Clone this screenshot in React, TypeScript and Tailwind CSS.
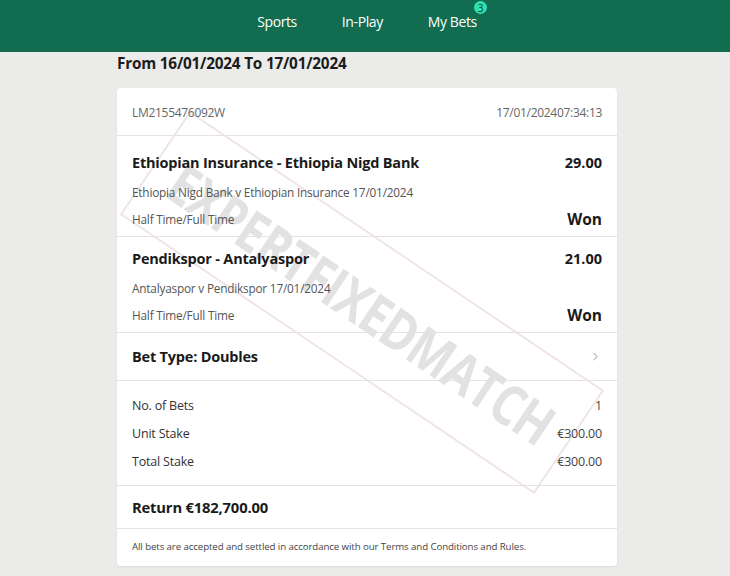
import { ChevronRight } from "lucide-react";

const font = { fontFamily: '"Open Sans", "Noto Sans", sans-serif' };

function Selection({
  title,
  odds,
  event,
  first,
}: {
  title: string;
  odds: string;
  event: string;
  first?: boolean;
}) {
  return (
    <div className={`border-b border-[#e3e3e3] px-[15px] ${first ? "h-[101px] pt-[16px]" : "h-[96px] pt-[11px]"}`}>
      <div className="flex h-[22px] items-center justify-between">
        <span className="text-[14.5px] font-bold tracking-[-0.2px] text-[#1a1a1a]">{title}</span>
        <span className="text-[14.5px] font-bold text-[#1a1a1a]">{odds}</span>
      </div>
      <div className="mt-[8px] h-[22px] flex items-center text-[11.8px] text-[#555] tracking-[-0.2px]">{event}</div>
      <div className="mt-[5px] flex h-[22px] items-center justify-between">
        <span className="text-[11.8px] text-[#555] tracking-[-0.2px]">Half Time/Full Time</span>
        <span className="text-[15.5px] font-bold text-[#1a1a1a]">Won</span>
      </div>
    </div>
  );
}

function StakeRow({ label, value }: { label: string; value: string }) {
  return (
    <div className="flex h-[28px] items-center justify-between text-[12.5px] tracking-[-0.2px] text-[#333]">
      <span>{label}</span>
      <span className="text-[#444]">{value}</span>
    </div>
  );
}

export default function App() {
  return (
    <div className="min-h-[576px] bg-[#ebebea]" style={font}>
      <header className="flex h-[52px] justify-center gap-[45px] bg-[#126d50] pl-[4px]">
        <span className="mt-[11px] text-[14px] tracking-[-0.4px] text-white">Sports</span>
        <span className="mt-[11px] text-[14px] tracking-[-0.4px] text-white">In-Play</span>
        <span className="relative mt-[11px] text-[14px] tracking-[-0.4px] text-white">
          My Bets
          <span className="absolute -right-[10px] -top-[10px] flex h-[13px] w-[13px] items-center justify-center rounded-full bg-[#2fe0b0] text-[10px] leading-none text-[#0b3d2e]">
            3
          </span>
        </span>
      </header>

      <main className="pl-[4px]">
        <div className="mx-auto w-[500px]">
          <h1 className="text-[15.3px] font-bold leading-[22px] tracking-[-0.2px] text-[#1c1c1c]">
            From 16/01/2024 To 17/01/2024
          </h1>

          <div className="relative mt-[14px] overflow-hidden rounded-[4px] bg-white shadow-[0_1px_2px_rgba(0,0,0,0.08)]">
            {/* watermark */}
            <div className="pointer-events-none absolute left-[-5px] top-[152px] flex h-[125px] w-[500px] rotate-[34deg] items-center justify-center border-[2px] border-[#f0e4e6]">
              <span
                className="inline-block scale-x-[0.82] text-[56px] font-bold tracking-[-1px] text-[#e2e2e2]"
                style={{ fontFamily: '"Open Sans", sans-serif' }}
              >
                EXPERTFIXEDMATCH
              </span>
            </div>

            <div className="relative">
              <div className="flex h-[48px] items-center justify-between border-b border-[#e3e3e3] px-[15px] pt-[2px] text-[12px] tracking-[-0.3px] text-[#666]">
                <span>LM2155476092W</span>
                <span>17/01/202407:34:13</span>
              </div>

              <Selection
                first
                title="Ethiopian Insurance - Ethiopia Nigd Bank"
                odds="29.00"
                event="Ethiopia Nigd Bank v Ethiopian Insurance 17/01/2024"
              />
              <Selection
                title="Pendikspor - Antalyaspor"
                odds="21.00"
                event="Antalyaspor v Pendikspor 17/01/2024"
              />

              <div className="flex h-[48px] items-center justify-between border-b border-[#e3e3e3] px-[15px]">
                <span className="text-[14.5px] font-bold tracking-[-0.2px] text-[#1a1a1a]">Bet Type: Doubles</span>
                <ChevronRight className="h-[13px] w-[13px] text-[#777]" strokeWidth={1.5} />
              </div>

              <div className="h-[105px] border-b border-[#e3e3e3] px-[15px] pt-[11px]">
                <StakeRow label="No. of Bets" value="1" />
                <StakeRow label="Unit Stake" value="€300.00" />
                <StakeRow label="Total Stake" value="€300.00" />
              </div>

              <div className="flex h-[43px] items-center border-b border-[#e3e3e3] px-[15px]">
                <span className="text-[14.8px] font-bold tracking-[-0.2px] text-[#1a1a1a]">Return €182,700.00</span>
              </div>

              <div className="flex h-[37px] items-center px-[15px] text-[9.7px] tracking-[-0.1px] text-[#444]">
                All bets are accepted and settled in accordance with our Terms and Conditions and Rules.
              </div>
            </div>
          </div>
        </div>
      </main>
    </div>
  );
}
